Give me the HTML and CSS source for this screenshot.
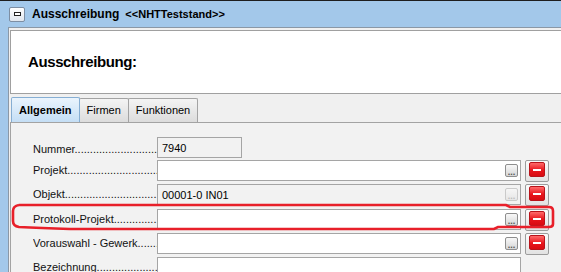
FILE: index.html
```html
<!DOCTYPE html>
<html lang="de">
<head>
    <meta charset="UTF-8">
    <title>Ausschreibung</title>
    <link rel="stylesheet" href="styles.css">
</head>
<body>
    <div class="window">
        <div class="titlebar">
            <span class="sysicon"><span></span></span>
            <span class="title">Ausschreibung</span>
            <span class="subtitle">&lt;&lt;NHTTeststand&gt;&gt;</span>
        </div>

        <div class="frame">
            <div class="client">
                <div class="banner">
                    <h1>Ausschreibung:</h1>
                </div>

                <div class="tabs">
                    <div class="tab active">Allgemein</div>
                    <div class="tab">Firmen</div>
                    <div class="tab">Funktionen</div>
                </div>

                <div class="tabpanel">
                    <div class="row">
                        <div class="label low">Nummer..........................................................</div>
                        <div class="field short disabled">7940</div>
                    </div>
                    <div class="row">
                        <div class="label">Projekt..........................................................</div>
                        <div class="field"><span></span><span class="pick">...</span></div>
                        <div class="remove"><span class="minus"></span></div>
                    </div>
                    <div class="row spaced">
                        <div class="label">Objekt..........................................................</div>
                        <div class="field disabled"><span>00001-0 IN01</span><span class="pick off">...</span></div>
                        <div class="remove"><span class="minus"></span></div>
                    </div>
                    <div class="row">
                        <div class="label">Protokoll-Projekt..........................................................</div>
                        <div class="field"><span></span><span class="pick">...</span></div>
                        <div class="remove"><span class="minus"></span></div>
                    </div>
                    <div class="row">
                        <div class="label">Vorauswahl - Gewerk..........................................................</div>
                        <div class="field"><span></span><span class="pick">...</span></div>
                        <div class="remove"><span class="minus"></span></div>
                    </div>
                    <div class="row">
                        <div class="label">Bezeichnung..........................................................</div>
                        <div class="field tall"></div>
                    </div>
                </div>
            </div>
        </div>

        <!-- hand drawn marker around the Protokoll-Projekt row -->
        <svg class="marker" width="561" height="272" viewBox="0 0 561 272">
            <path d="M19 205 L506 205 L510 207 L549 207 Q553 207 553 211 L553 224 Q553 227 549 227 L498 227 L494 229 L70 229 Q40 228 19 227 Q13 226 13 221 L13 211 Q13 206 19 205" fill="none" stroke="#e8202a" stroke-width="2.6"/>
        </svg>
    </div>
</body>
</html>
```

FILE: styles.css
```css
body {
    margin: 0;
    font-family: "Liberation Sans", Arial, sans-serif;
    font-size: 11px;
    color: #000;
    background: #f0f0f0;
    overflow: hidden;
}

.window {
    position: relative;
    width: 561px;
    height: 272px;
    display: flex;
    flex-direction: column;
    background: #a3c8ea;
    overflow: hidden;
}

.titlebar {
    height: 26px;
    border-top: 1px solid #1e1e1e;
    display: flex;
    align-items: center;
    padding-left: 9px;
    flex-shrink: 0;
}

.sysicon {
    width: 14px;
    height: 13px;
    border: 1px solid #7d8ea3;
    border-radius: 2px;
    background: linear-gradient(#ffffff, #dfe6ee);
    display: flex;
    align-items: center;
    justify-content: center;
    margin-right: 7px;
}

.sysicon span {
    width: 5px;
    height: 2px;
    border: 1px solid #222;
    background: #fff;
}

.title {
    font-weight: bold;
    font-size: 12px;
    margin-right: 6px;
}

.subtitle {
    font-weight: bold;
    font-size: 11px;
}

.frame {
    flex: 1;
    padding-left: 8px;
    min-height: 0;
}

.client {
    height: 100%;
    box-sizing: border-box;
    background: #f0f0f0;
    border-top: 1px solid #8b98a6;
    border-left: 1px solid #8b98a6;
    padding: 2px 0 0 1px;
}

.banner {
    height: 62px;
    border: 1px solid #a0a0a0;
    border-right: none;
    background: #fff;
    display: flex;
    align-items: center;
    padding-left: 17px;
}

.banner h1 {
    margin: 0;
    font-size: 15px;
    line-height: 18px;
    letter-spacing: -0.4px;
    font-weight: bold;
}

.tabs {
    display: flex;
    align-items: flex-end;
    margin-top: 3px;
    padding-left: 1px;
}

.tab {
    height: 23px;
    line-height: 23px;
    padding: 0 7px;
    border: 1px solid #a3a3a3;
    border-bottom: none;
    border-radius: 2px 2px 0 0;
    background: linear-gradient(#f4f4f4, #dcdcdc);
    margin-right: -1px;
}

.tab.active {
    height: 24px;
    line-height: 24px;
    font-weight: bold;
    border-color: #86aed3;
    background: linear-gradient(#eaf4fd, #c4def5);
    position: relative;
    z-index: 1;
}

.tabpanel {
    border-top: 1px solid #a3a3a3;
    border-left: 1px solid #a3a3a3;
    background: #f2f2f2;
    padding: 14px 0 0 22px;
    height: 200px;
}

.row {
    display: flex;
    align-items: flex-start;
    margin-bottom: 2px;
}

.row.spaced {
    margin-bottom: 3px;
}

.label {
    width: 124px;
    line-height: 21px;
    white-space: nowrap;
    overflow: hidden;
    color: #111;
}

.label.low {
    padding-top: 2px;
    margin-bottom: -2px;
}

.field {
    width: 364px;
    height: 21px;
    box-sizing: border-box;
    border: 1px solid #a5a5a5;
    background: #fff;
    display: flex;
    align-items: center;
    justify-content: space-between;
    padding: 0 2px 0 4px;
}

.field.short {
    width: 85px;
}

.field.disabled {
    background: #f2f2f2;
}

.field.tall {
    height: 40px;
}

.pick {
    width: 11px;
    height: 11px;
    border: 1px solid #8e8e8e;
    border-radius: 2px;
    background: linear-gradient(#f8f8f8, #d6d6d6);
    font-size: 9px;
    font-weight: bold;
    line-height: 14px;
    text-align: center;
    color: #555;
    overflow: hidden;
}

.pick.off {
    border-color: #cacaca;
    background: linear-gradient(#f6f6f6, #e6e6e6);
    color: #bdbdbd;
}

.remove {
    width: 22px;
    height: 19px;
    margin-left: 4px;
    border: 1px solid #9c9c9c;
    border-radius: 2px;
    background: linear-gradient(#fbfbfb, #e2e2e2);
    display: flex;
    justify-content: center;
    padding-top: 1px;
}

.minus {
    position: relative;
    width: 14px;
    height: 13px;
    border: 1px solid #b8131a;
    border-radius: 2px;
    background: linear-gradient(#ff6a6a, #e8151c 55%, #d80c12);
}

.minus::after {
    content: "";
    position: absolute;
    left: 3px;
    top: 6px;
    width: 8px;
    height: 2px;
    background: #fff;
}

.marker {
    position: absolute;
    left: 0;
    top: 0;
    pointer-events: none;
}
```
